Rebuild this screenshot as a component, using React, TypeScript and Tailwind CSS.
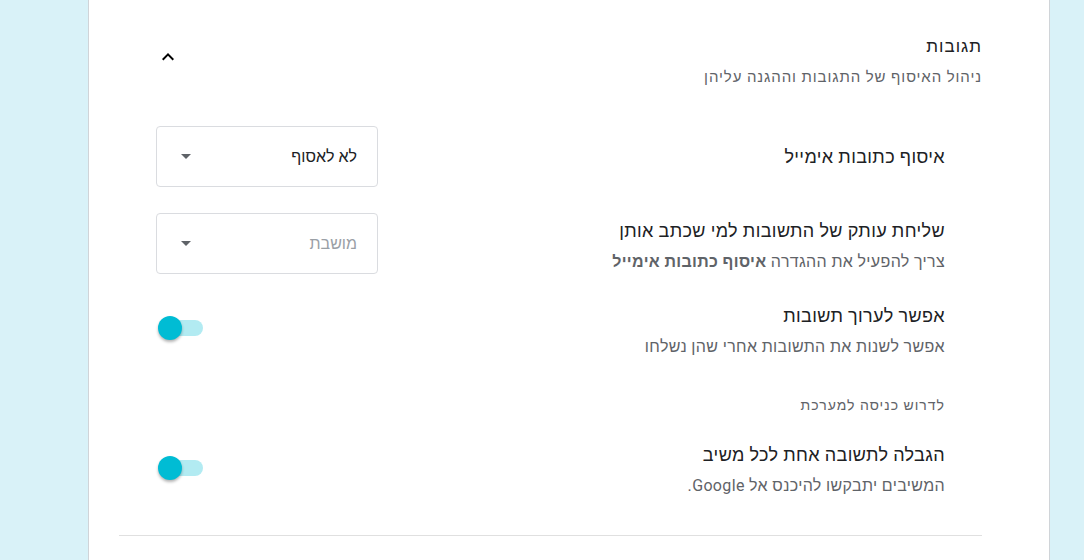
import React, { useState } from "react";

const font = { fontFamily: "Roboto, 'Liberation Sans', Arial, sans-serif" };

function ChevronUp() {
  return (
    <svg width="24" height="24" viewBox="0 0 24 24" className="block">
      <path d="M7.41 15.41L12 10.83l4.59 4.58L18 14l-6-6-6 6z" fill="#000" />
    </svg>
  );
}

function Select({ value, disabled }: { value: string; disabled?: boolean }) {
  return (
    <div className="flex h-[61px] w-[222px] items-center justify-between rounded-[4px] border border-[#dadce0] bg-white pl-[24px] pr-[20px]">
      <span className={`text-[16px] ${disabled ? "text-[#9aa0a6]" : "text-[#202124]"}`}>{value}</span>
      <span className="block h-0 w-0 border-x-[5px] border-t-[5px] border-x-transparent border-t-[#5f6368]" />
    </div>
  );
}

function Toggle({ on, onClick, className = "" }: { on: boolean; onClick: () => void; className?: string }) {
  return (
    <button type="button" onClick={onClick} className={`relative h-[26px] w-[47px] shrink-0 ${className}`}>
      <span className="absolute right-0 top-[5px] h-[16px] w-[36px] rounded-full bg-[#b2ebf2]" />
      <span
        className={`absolute top-[1px] h-[24px] w-[24px] rounded-full bg-[#00bcd4] shadow-[0_2px_3px_rgba(0,0,0,0.3)] ${on ? "left-[23px]" : "left-[2px]"}`}
      />
    </button>
  );
}

function Label({ title, children, className = "" }: { title: string; children?: React.ReactNode; className?: string }) {
  return (
    <div className={`flex flex-col ${className}`}>
      <div className="text-[18px] leading-[26px] tracking-[0.37px] text-[#202124]">{title}</div>
      {children && <div className="mt-[8px] text-[16px] leading-[20px] tracking-[0.35px] text-[#5f6368]">{children}</div>}
    </div>
  );
}

export default function App() {
  const [editable, setEditable] = useState(false);
  const [limitOne, setLimitOne] = useState(false);

  return (
    <div dir="rtl" style={font} className="flex h-[560px] w-[1084px] overflow-hidden bg-[#d9f2f8]">
      <div className="mr-[34px] h-full w-[962px] border-x border-[#d0d4d8] bg-white pl-[30px] pr-[67px]">
        {/* header */}
        <div className="flex items-start justify-between pt-[34px]">
          <div className="flex flex-col">
            <div className="text-[17px] leading-[24px] tracking-[1px] text-[#202124]">תגובות</div>
            <div className="mt-[8px] text-[15px] leading-[22px] tracking-[0.9px] text-[#5f6368]">ניהול האיסוף של התגובות וההגנה עליהן</div>
          </div>
          <div className="ml-[37px] mt-[11px]">
            <ChevronUp />
          </div>
        </div>

        <div className="px-[37px]">
          <div className="mt-[38px] flex h-[61px] items-center justify-between">
            <Label title="איסוף כתובות אימייל" />
            <Select value="לא לאסוף" />
          </div>

          <div className="mt-[26px] flex h-[61px] items-center justify-between">
            <Label title="שליחת עותק של התשובות למי שכתב אותן" className="pt-[3px]">
              צריך להפעיל את ההגדרה <b className="font-bold">איסוף כתובות אימייל</b>
            </Label>
            <Select value="מושבת" disabled />
          </div>

          <div className="mt-[29px] flex items-start justify-between">
            <Label title="אפשר לערוך תשובות">אפשר לשנות את התשובות אחרי שהן נשלחו</Label>
            <Toggle className="mt-[12px]" on={editable} onClick={() => setEditable(!editable)} />
          </div>

          <div className="mt-[39px] text-[14px] leading-[18px] tracking-[1px] text-[#5f6368]">לדרוש כניסה למערכת</div>

          <div className="mt-[28px] flex items-start justify-between">
            <Label title="הגבלה לתשובה אחת לכל משיב">המשיבים יתבקשו להיכנס אל Google.</Label>
            <Toggle className="mt-[13px]" on={limitOne} onClick={() => setLimitOne(!limitOne)} />
          </div>
        </div>

        <div className="mt-[39px] h-px bg-[#e0e0e0]" />
      </div>
    </div>
  );
}
